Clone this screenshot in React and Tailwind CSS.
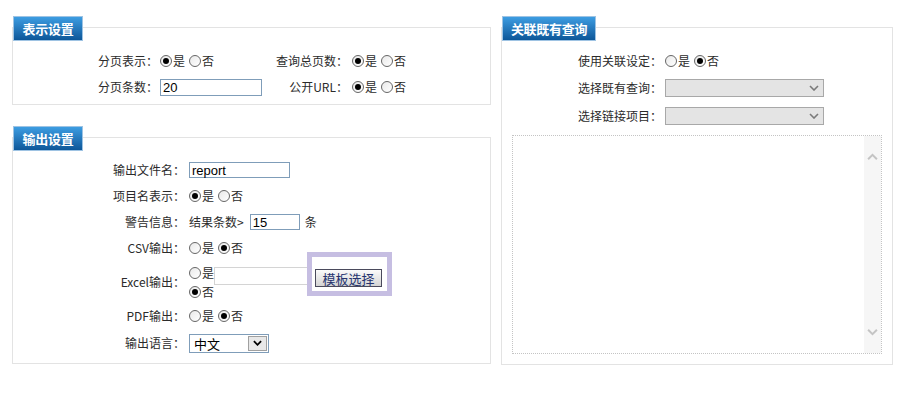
import React from "react";

const Radio = ({ checked, label, className = "mr-[4px]" }) => (
  <span className={"flex items-center " + className}>
    <span className="w-[12px] h-[12px] rounded-full border border-[#666] bg-linear-to-br from-[#e9e9e9] to-white flex items-center justify-center mr-[1px] shrink-0">
      {checked && <span className="w-[6px] h-[6px] rounded-full bg-black" />}
    </span>
    <span>{label}</span>
  </span>
);

const YesNo = ({ yes }) => (
  <span className="flex items-center">
    <Radio checked={yes} label="是" />
    <Radio checked={!yes} label="否" />
  </span>
);

const Tab = ({ children, w }) => (
  <div
    className={
      "relative z-10 ml-[1px] h-[25px] -mb-[14px] flex items-center justify-center border border-[#9ec3e3] bg-linear-to-b from-[#3d9de2] to-[#0d5799] text-white font-bold text-[13px] tracking-[-0.3px] " +
      w
    }
  >
    {children}
  </div>
);

const TextBox = ({ value, w, h = "h-[16px]" }) => (
  <div
    className={
      "border border-[#7f9db9] bg-white flex items-center px-[2px] text-[13px] text-black font-['Liberation_Sans',sans-serif] " +
      w +
      " " +
      h
    }
  >
    {value}
  </div>
);

const Chevron = ({ className, color = "#777", up = false, sw = 1.6 }) => (
  <svg viewBox="0 0 10 6" className={className}>
    <path
      d={up ? "M1 5 L5 1 L9 5" : "M1 1 L5 5 L9 1"}
      fill="none"
      stroke={color}
      strokeWidth={sw}
    />
  </svg>
);

const GraySelect = () => (
  <div className="w-[159px] h-[18px] border border-[#a8a8a8] bg-[#e4e4e4] flex items-center justify-end pr-[4px]">
    <Chevron className="w-[10px] h-[6px]" color="#7a7a7a" />
  </div>
);

export default function App() {
  return (
    <div className="w-[910px] h-[415px] bg-white flex gap-[10px] pl-[12px] pt-[16px] text-[12px] text-[#2b2b2b] font-['Noto_Sans_CJK_SC',sans-serif] leading-none">
      {/* Left column */}
      <div className="w-[479px] flex flex-col">
        <Tab w="w-[70px]">表示设置</Tab>
        <div className="border border-[#e3e3e3] pt-[20px] pb-[4px]">
          <div className="h-[26px] flex items-center">
            <div className="w-[145px] text-right">分页表示：</div>
            <div className="w-[102px] ml-[2px]">
              <YesNo yes />
            </div>
            <div className="w-[86px] text-right">查询总页数：</div>
            <div className="ml-[4px]">
              <YesNo yes />
            </div>
          </div>
          <div className="h-[26px] flex items-center">
            <div className="w-[145px] text-right">分页条数：</div>
            <div className="w-[102px] ml-[2px]">
              <TextBox value="20" w="w-[102px]" h="h-[17px]" />
            </div>
            <div className="w-[86px] text-right">公开URL：</div>
            <div className="ml-[4px]">
              <YesNo yes />
            </div>
          </div>
        </div>

        <div className="mt-[21px]">
          <Tab w="w-[70px]">输出设置</Tab>
        </div>
        <div className="border border-[#e3e3e3] pt-[19px] pb-[6px]">
          <div className="h-[26px] flex items-center">
            <div className="w-[172px] text-right">输出文件名：</div>
            <div className="ml-[4px]">
              <TextBox value="report" w="w-[101px]" />
            </div>
          </div>
          <div className="h-[26px] flex items-center">
            <div className="w-[172px] text-right">项目名表示：</div>
            <div className="ml-[4px]">
              <YesNo yes />
            </div>
          </div>
          <div className="h-[26px] flex items-center">
            <div className="w-[172px] text-right">警告信息：</div>
            <div className="ml-[4px] flex items-center">
              <span>结果条数&gt;</span>
              <span className="ml-[6px]">
                <TextBox value="15" w="w-[50px]" />
              </span>
              <span className="ml-[5px]">条</span>
            </div>
          </div>
          <div className="h-[26px] flex items-center">
            <div className="w-[172px] text-right">CSV输出：</div>
            <div className="ml-[4px]">
              <YesNo yes={false} />
            </div>
          </div>
          <div className="h-[42px] flex items-center">
            <div className="w-[172px] text-right">Excel输出：</div>
            <div className="ml-[4px] flex flex-col">
              <div className="h-[19px] flex items-start">
                <span className="h-[19px] flex items-center">
                  <Radio checked={false} label="是" className="" />
                </span>
                <div className="mt-[4px] w-[96px] h-[18px] border border-[#d4d4d4] bg-white" />
                <div className="relative mt-[6px] ml-[5px]">
                  <div className="absolute -left-[8px] -top-[17px] -right-[10px] -bottom-[9px] border-[5px] border-[#c6bee2] bg-white" />
                  <div className="relative w-[67px] h-[18px] border border-[#4a4a5c] bg-linear-to-b from-[#fbfbfb] to-[#d4d4d4] flex items-center justify-center text-[13px] text-[#26346f]">
                    模板选择
                  </div>
                </div>
              </div>
              <div className="h-[19px] flex items-center">
                <Radio checked label="否" className="" />
              </div>
            </div>
          </div>
          <div className="h-[26px] flex items-center">
            <div className="w-[172px] text-right">PDF输出：</div>
            <div className="ml-[4px]">
              <YesNo yes={false} />
            </div>
          </div>
          <div className="h-[28px] flex items-center">
            <div className="w-[172px] text-right">输出语言：</div>
            <div className="ml-[4px] w-[80px] h-[19px] border border-[#7f9db9] bg-white flex items-stretch">
              <div className="flex-1 flex items-center pl-[4px] text-[13px] text-black">中文</div>
              <div className="w-[19px] m-[1px] border border-[#a0a0a0] bg-[#e8e8e8] flex items-center justify-center">
                <Chevron className="w-[9px] h-[6px]" color="#000" sw={2} />
              </div>
            </div>
          </div>
        </div>
      </div>

      {/* Right column */}
      <div className="w-[392px] flex flex-col">
        <Tab w="w-[94px]">关联既有查询</Tab>
        <div className="border border-[#e3e3e3] pt-[20px] pb-[10px]">
          <div className="h-[26px] flex items-center">
            <div className="w-[160px] text-right">使用关联设定：</div>
            <div className="ml-[3px]">
              <YesNo yes={false} />
            </div>
          </div>
          <div className="h-[28px] flex items-center">
            <div className="w-[160px] text-right">选择既有查询：</div>
            <div className="ml-[3px]">
              <GraySelect />
            </div>
          </div>
          <div className="h-[28px] flex items-center">
            <div className="w-[160px] text-right">选择链接项目：</div>
            <div className="ml-[3px]">
              <GraySelect />
            </div>
          </div>
          <div className="mt-[5px] mx-[10px] h-[219px] border border-dotted border-[#c4c4c4] flex justify-end">
            <div className="w-[17px] bg-[#f6f6f6] flex flex-col items-center justify-between pt-[17px] pb-[17px]">
              <Chevron className="w-[11px] h-[8px]" color="#c4c4c4" up sw={1.8} />
              <Chevron className="w-[11px] h-[8px]" color="#c4c4c4" sw={1.8} />
            </div>
          </div>
        </div>
      </div>
    </div>
  );
}
